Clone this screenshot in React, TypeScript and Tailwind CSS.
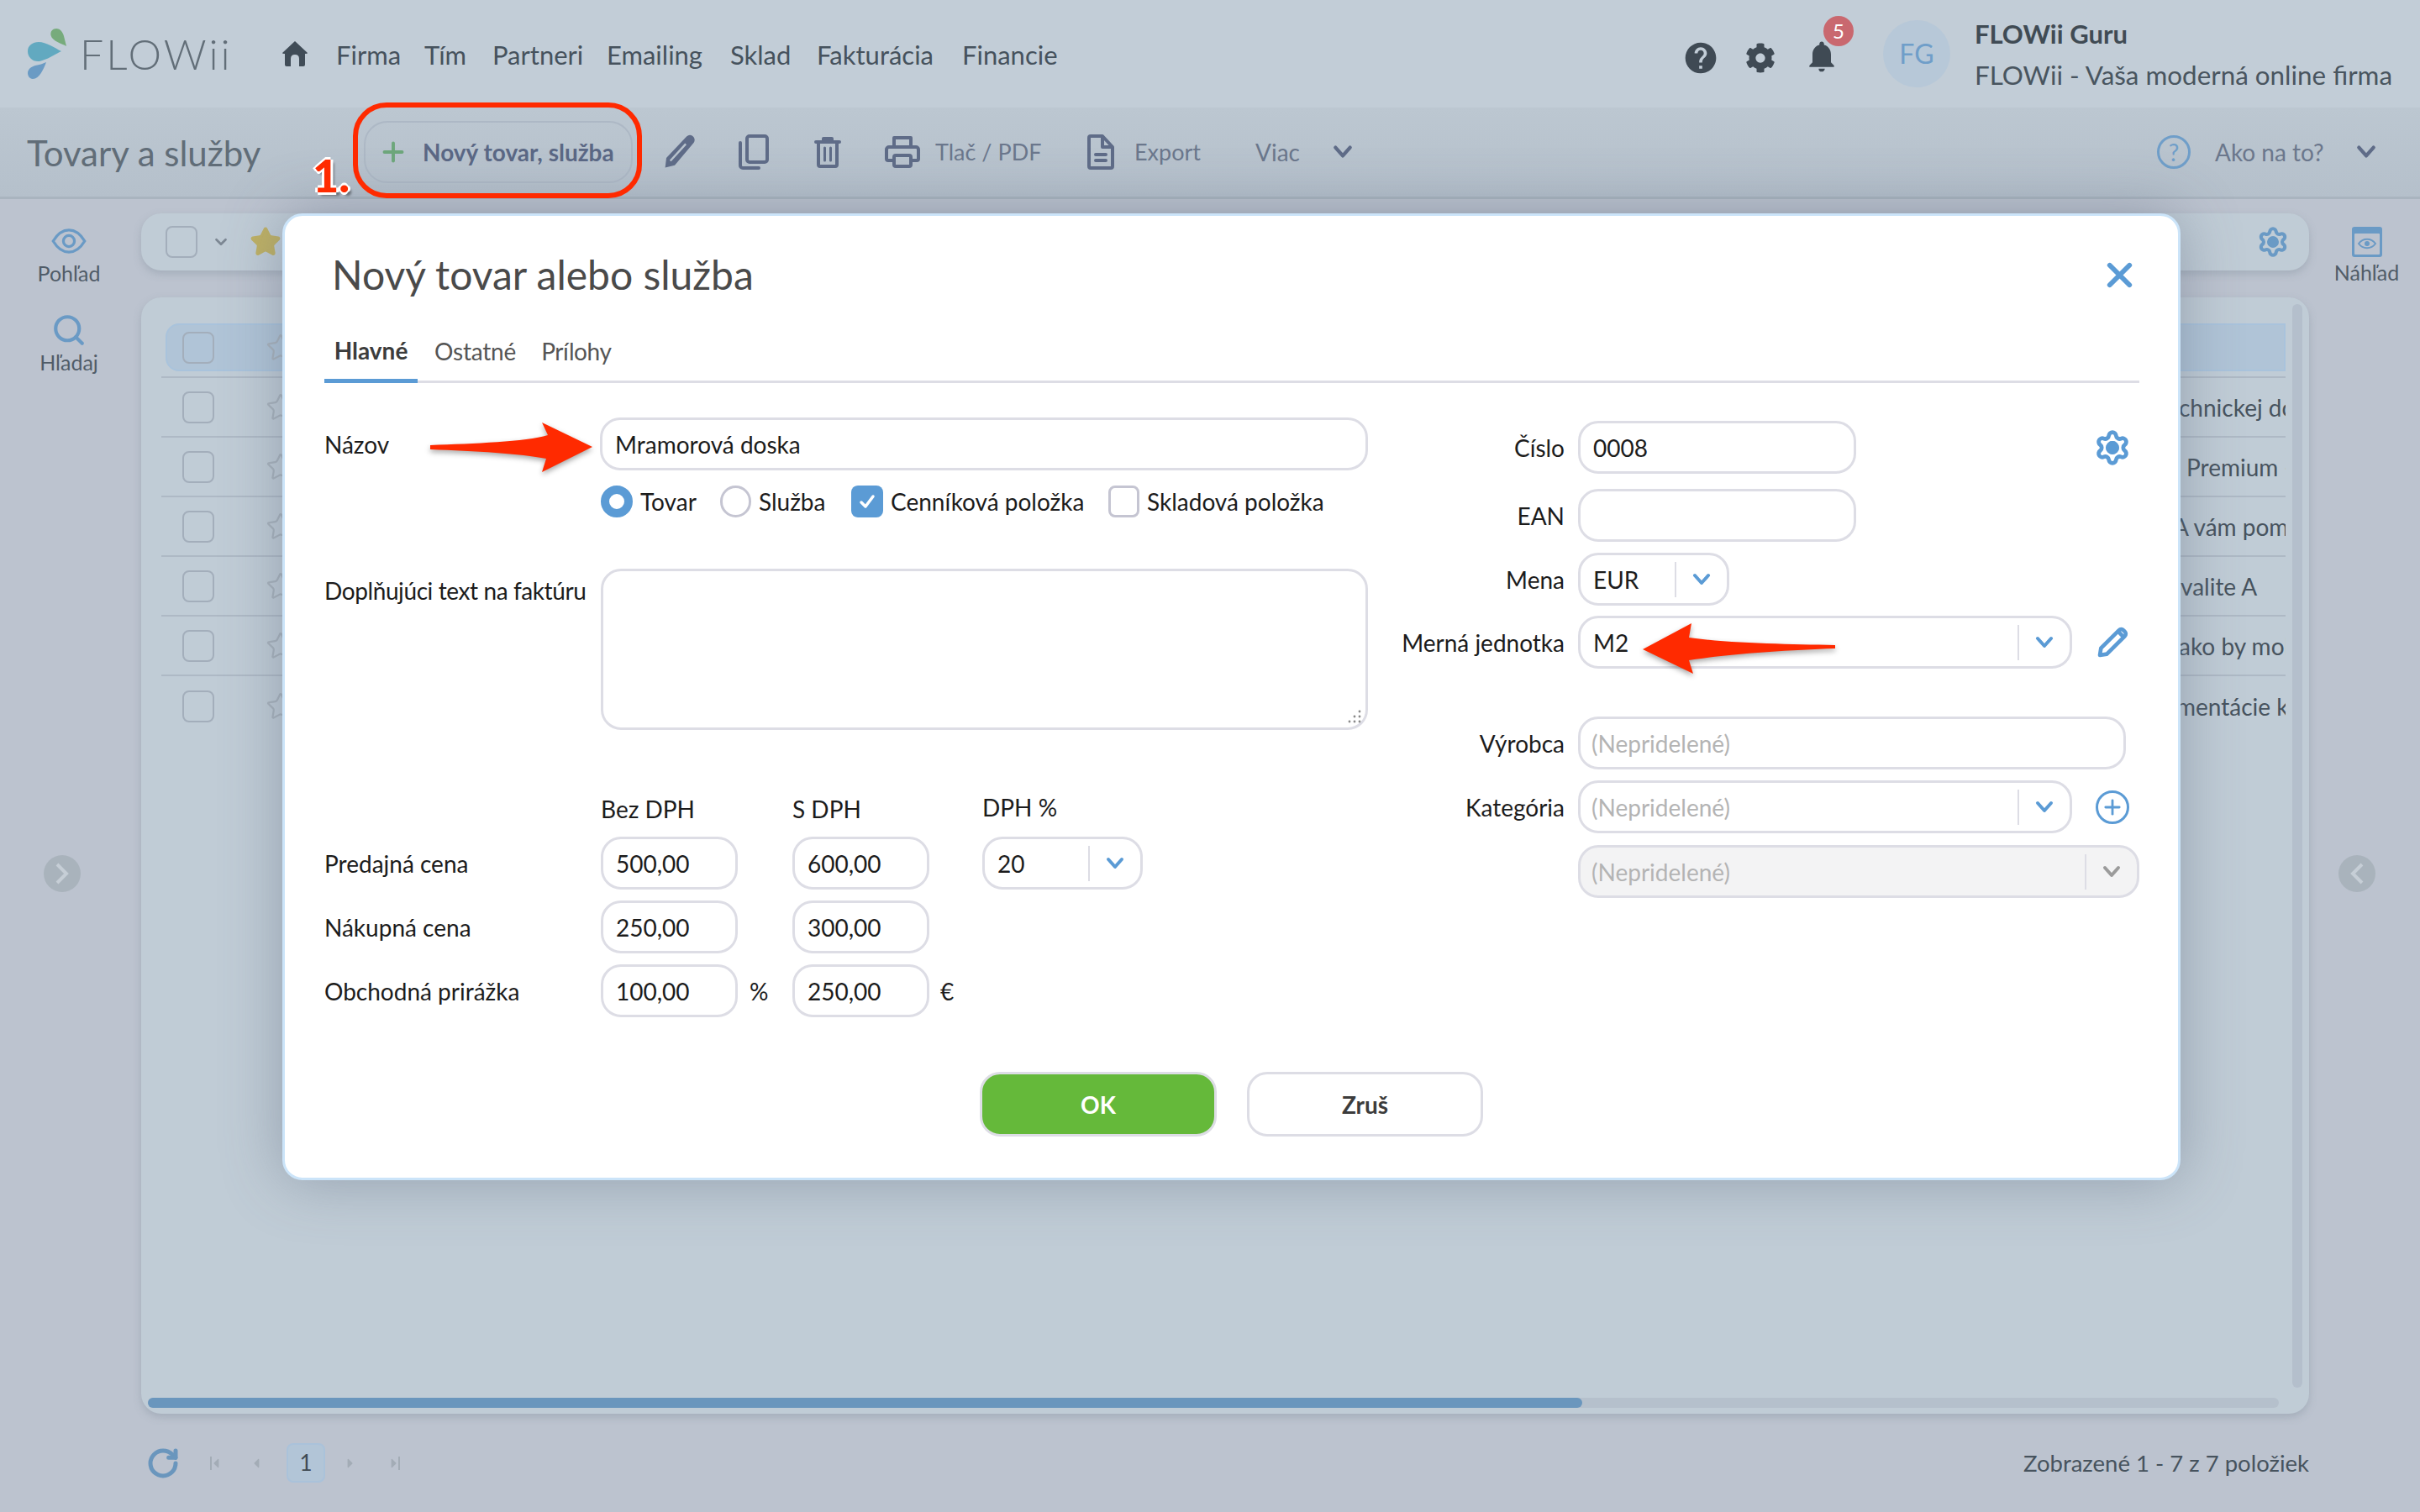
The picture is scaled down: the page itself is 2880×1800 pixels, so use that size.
import type React from "react"
import { useState } from "react"
import { ChevronDown, Plus, Settings, Star, X, Search, RotateCw } from "lucide-react"
import { MdHelp, MdNotifications } from "react-icons/md"
import { FaCog, FaCaretLeft, FaCaretRight } from "react-icons/fa"

const navItems = [
  { label: "Firma", cls: "w-[105px]" },
  { label: "Tím", cls: "w-[81px]" },
  { label: "Partneri", cls: "w-[136px]" },
  { label: "Emailing", cls: "w-[147px]" },
  { label: "Sklad", cls: "w-[103px]" },
  { label: "Fakturácia", cls: "w-[173px]" },
  { label: "Financie", cls: "w-[130px]" },
]

const rows = [
  { text: "", cls: "" },
  { text: "chnickej do", cls: "pl-[13px]" },
  { text: "Premium -", cls: "pl-[22px]" },
  { text: "A vám pom", cls: "pl-[6px]" },
  { text: "valite A", cls: "pl-[15px]" },
  { text: "ako by moh", cls: "pl-[13px]" },
  { text: "mentácie k", cls: "pl-[10px]" },
]

const Chevron = ({ className }: { className: string }) => (
  <svg viewBox="0 0 24 16" className={className} fill="none" stroke="currentColor" strokeWidth="4" strokeLinecap="round" strokeLinejoin="round">
    <path d="M4 3l8 9 8-9" />
  </svg>
)

const PencilIcon = ({ className }: { className: string }) => (
  <svg viewBox="0 0 24 24" className={className} fill="none" stroke="currentColor" strokeWidth="2.8" strokeLinejoin="round">
    <path d="M3 21l.8-5L16.6 3.2a2.3 2.3 0 0 1 3.3 0l.9.9a2.3 2.3 0 0 1 0 3.3L8 20.2z" />
    <path d="M16 4l4 4" />
  </svg>
)

const GearOutline = ({ className }: { className: string }) => (
  <Settings className={className} strokeWidth={2.6}>
    <circle cx="12" cy="12" r="3" fill="currentColor" />
  </Settings>
)

const Field = ({ value, placeholder, className }: { value?: string; placeholder?: string; className: string }) => (
  <div className={`h-[63px] shrink-0 rounded-[24px] border-[3px] border-[#dddde5] bg-white flex items-center text-[28px] ${value ? "pl-[15px] text-[#1c1c1c]" : "pl-[13px] text-[#b4b4b4]"} ${className}`}>
    {value || placeholder}
  </div>
)

const Select = ({ value, placeholder, className, disabled }: { value?: string; placeholder?: string; className: string; disabled?: boolean }) => (
  <div className={`h-[63px] shrink-0 rounded-[24px] border-[3px] border-[#dddde5] flex items-center text-[28px] ${disabled ? "bg-[#f3f3f4]" : "bg-white"} ${className}`}>
    <div className={`flex-1 ${value ? "pl-[15px] text-[#1c1c1c]" : "pl-[13px] text-[#b4b4b4]"}`}>{value || placeholder}</div>
    <div className="w-[62px] h-[42px] border-l-2 border-[#dddde5] flex items-center justify-center">
      <Chevron className={`w-[24px] h-[16px] ${disabled ? "text-[#9b9b9b]" : "text-[#5b9bd5]"}`} />
    </div>
  </div>
)

const PriceRow = ({ label, a, b, sa, sb, children }: { label: string; a: string; b: string; sa?: string; sb?: string; children?: React.ReactNode }) => (
  <div className="flex items-center text-[28px] text-[#1c1c1c]">
    <div className="w-[329px]">{label}</div>
    <Field value={a} className="w-[163px]" />
    <div className="w-[65px] pl-[14px]">{sa}</div>
    <Field value={b} className="w-[163px]" />
    <div className="w-[63px] pl-[13px]">{sb}</div>
    {children}
  </div>
)

const RightRow = ({ label, children }: { label?: string; children: React.ReactNode }) => (
  <div className="flex items-center text-[28px] text-[#1c1c1c]">
    <div className="w-[234px] text-right mr-[16px]">{label}</div>
    {children}
  </div>
)

const Modal = () => {
  const [tab] = useState("Hlavné")
  return (
    <div className="absolute left-[336px] top-[254px] w-[2259px] h-[1151px] rounded-[24px] border-[3px] border-[#cbe4f9] bg-white pl-[47px] pr-[46px] pt-[40px] shadow-[0_0_70px_rgba(90,105,125,0.45)]">
      <div className="flex items-center justify-between h-[60px]">
        <h2 className="ml-[9px] text-[48px] leading-[60px] text-[#4a4a4a]">Nový tovar alebo služba</h2>
        <X className="w-[47px] h-[47px] text-[#5b9bd5]" strokeWidth={3} />
      </div>
      <div className="mt-[26px] h-[73px] flex items-end border-b-[3px] border-[#dddde5] text-[28px]">
        <div className={`w-[111px] h-[73px] -mb-[3px] flex items-center justify-center border-b-[5px] border-[#5b9bd5] font-bold ${tab === "Hlavné" ? "text-[#3c3c3c]" : ""}`}>Hlavné</div>
        <div className="ml-[20px] h-[70px] flex items-center text-[#555555] tracking-[-0.2px]">Ostatné</div>
        <div className="ml-[30px] h-[70px] flex items-center text-[#555555] tracking-[-0.4px]">Prílohy</div>
      </div>

      <div className="flex">
        <div className="w-[1242px] pt-[41px] text-[28px] text-[#1c1c1c]">
          <div className="flex items-center">
            <div className="w-[329px]">Názov</div>
            <Field value="Mramorová doska" className="w-[914px]" />
          </div>
          <div className="ml-[329px] mt-[18px] h-[38px] flex items-center">
            <div className="w-[38px] h-[38px] rounded-full border-[10px] border-[#5b9bd5] bg-white"></div>
            <div className="ml-[9px] w-[95px]">Tovar</div>
            <div className="w-[37px] h-[38px] rounded-full border-[3px] border-[#c5c5d2]"></div>
            <div className="ml-[9px] w-[110px]">Služba</div>
            <div className="w-[38px] h-[38px] rounded-[8px] bg-[#5b9bd5] flex items-center justify-center">
              <svg viewBox="0 0 24 24" className="w-[24px] h-[24px]" fill="none" stroke="white" strokeWidth="3.5" strokeLinecap="round" strokeLinejoin="round">
                <path d="M5 13l5 5 9-12" />
              </svg>
            </div>
            <div className="ml-[9px] w-[259px]">Cenníková položka</div>
            <div className="w-[37px] h-[38px] rounded-[8px] border-[3px] border-[#c5c5d2]"></div>
            <div className="ml-[9px]">Skladová položka</div>
          </div>
          <div className="mt-[61px] flex items-start">
            <div className="w-[329px] pt-[5px] whitespace-nowrap tracking-[-0.4px]">Doplňujúci text na faktúru</div>
            <div className="relative w-[914px] h-[192px] rounded-[24px] border-[3px] border-[#dddde5]">
              <svg viewBox="0 0 20 20" className="absolute right-[3px] bottom-[3px] w-[20px] h-[20px] text-[#8a8a8a]" fill="currentColor">
                <circle cx="16" cy="4" r="1.4" /><circle cx="16" cy="10" r="1.4" /><circle cx="10" cy="10" r="1.4" />
                <circle cx="16" cy="16" r="1.4" /><circle cx="10" cy="16" r="1.4" /><circle cx="4" cy="16" r="1.4" />
              </svg>
            </div>
          </div>
          <div className="mt-[76px] h-[36px] flex items-center">
            <div className="ml-[329px] w-[228px]">Bez DPH</div>
            <div className="w-[226px]">S DPH</div>
            <div className="-mt-[4px]">DPH %</div>
          </div>
          <div className="mt-[15px] flex flex-col gap-[13px]">
            <PriceRow label="Predajná cena" a="500,00" b="600,00">
              <Select value="20" className="w-[191px]" />
            </PriceRow>
            <PriceRow label="Nákupná cena" a="250,00" b="300,00" />
            <PriceRow label="Obchodná prirážka" a="100,00" b="250,00" sa="%" sb="€" />
          </div>
        </div>

        <div className="flex-1 pt-[45px]">
          <RightRow label="Číslo">
            <Field value="0008" className="w-[331px]" />
            <GearOutline className="ml-[283px] w-[44px] h-[44px] text-[#5b9bd5]" />
          </RightRow>
          <div className="mt-[18px]"><RightRow label="EAN"><Field className="w-[331px]" /></RightRow></div>
          <div className="mt-[13px]"><RightRow label="Mena"><Select value="EUR" className="w-[180px]" /></RightRow></div>
          <div className="mt-[12px]">
            <RightRow label="Merná jednotka">
              <Select value="M2" className="w-[588px]" />
              <PencilIcon className="ml-[28px] w-[40px] h-[40px] text-[#5b9bd5]" />
            </RightRow>
          </div>
          <div className="mt-[57px]"><RightRow label="Výrobca"><Field placeholder="(Nepridelené)" className="w-[652px]" /></RightRow></div>
          <div className="mt-[13px]">
            <RightRow label="Kategória">
              <Select placeholder="(Nepridelené)" className="w-[588px]" />
              <div className="ml-[28px] w-[40px] h-[40px] rounded-full border-[3px] border-[#5b9bd5] flex items-center justify-center">
                <Plus className="w-[28px] h-[28px] text-[#5b9bd5]" strokeWidth={2.4} />
              </div>
            </RightRow>
          </div>
          <div className="mt-[14px]"><RightRow><Select placeholder="(Nepridelené)" className="w-[668px]" disabled /></RightRow></div>
        </div>
      </div>

      <div className="absolute left-[0px] right-[0px] top-[1019px] flex justify-center gap-[36px] text-[28px] font-bold">
        <button className="w-[282px] h-[77px] rounded-[24px] bg-[#65b93a] border-[3px] border-[#dddde5] text-white">OK</button>
        <button className="w-[281px] h-[77px] rounded-[24px] bg-white border-[3px] border-[#dddde5] text-[#3c3c3c]">Zruš</button>
      </div>

      <svg className="absolute left-[-339px] top-[-257px] w-[2880px] h-[1800px] pointer-events-none overflow-visible" viewBox="0 0 2880 1800">
        <g fill="#ff2a00" className="drop-shadow-[0_3px_3px_rgba(0,0,0,0.35)]">
          <path d="M512 530C565 528 625 526 652 518L645 503L705 532L645 562L650 546C620 540 565 537 512 535Z" />
          <path d="M1955 773L2013 742L2010 759C2060 766 2130 767 2184 768L2184 772C2130 774 2060 778 2010 786L2015 802Z" />
        </g>
      </svg>
    </div>
  )
}

export default function App() {
  return (
    <div className="relative w-[2880px] h-[1800px] overflow-hidden bg-[#bcc3cf] flex flex-col [font-family:Lato,sans-serif]">
      {/* top bar */}
      <header className="h-[128px] shrink-0 bg-[#c2cdd7] flex items-center">
        <svg viewBox="0 0 50 64" className="ml-[32px] w-[50px] h-[64px]">
          <path d="M47 23C42 20 30 17 28.5 10C27.5 5 31 2 35 2C40 2 43 7 44 11C45 15 46 19 47 23Z" fill="#77ab7c" />
          <path d="M41 29C33 33 24 39 15 41C7 42 1 36 1 29C1 22 7 18 14 18C23 18 33 25 41 29Z" fill="#62a9c0" />
          <path d="M23 42C20 50 15 62 7 62C3 62 1 58 1 55C1 50 6 47 10 46C15 45 19 44 23 42Z" fill="#6b9bc4" />
        </svg>
        <div className="ml-[13px] w-[240px] text-[50px] font-light tracking-[3px] text-[#626e78] leading-none">FLOWii</div>
        <svg viewBox="0 0 32 32" className="w-[32px] h-[32px] text-[#404c57]" fill="currentColor">
          <path d="M16 1L31 15Q31 16 29 16H28V29Q28 31 26 31H21V22Q21 17 16 17Q11 17 11 22V31H6Q4 31 4 29V16H3Q1 16 1 15Z" />
        </svg>
        <nav className="ml-[33px] pt-[2px] flex text-[31px] text-[#46525d]">
          {navItems.map((item) => (
            <div key={item.label} className={item.cls}>{item.label}</div>
          ))}
        </nav>
        <div className="ml-auto flex items-center">
          <MdHelp className="mt-[10px] w-[44px] h-[44px] text-[#3f4a54]" />
          <FaCog className="mt-[10px] ml-[31px] w-[36px] h-[36px] text-[#3f4a54]" />
          <div className="relative ml-[33px] mt-[6px]">
            <MdNotifications className="w-[44px] h-[44px] text-[#3f4a54]" />
            <div className="absolute -top-[26px] left-[24px] w-[36px] h-[36px] rounded-full bg-[#c9686f] text-white text-[24px] flex items-center justify-center">5</div>
          </div>
          <div className="ml-[51px] w-[80px] h-[80px] rounded-full bg-[#b7c8d8] text-[#6f9ec9] text-[32px] flex items-center justify-center">FG</div>
          <div className="ml-[29px] mr-[32px] w-[498px] whitespace-nowrap">
            <div className="text-[31px] leading-[50px] font-bold text-[#404b54]">FLOWii Guru</div>
            <div className="text-[31.4px] leading-[48px] text-[#49555f]">FLOWii - Vaša moderná online firma</div>
          </div>
        </div>
      </header>

      {/* toolbar */}
      <div className="h-[109px] shrink-0 bg-linear-to-b from-[#bcc7d1] to-[#b5c0cb] border-b-[3px] border-[#a9b4bf] flex items-center text-[28px] text-[#6b778c]">
        <div className="w-[433px] pl-[32px] pt-[2px] text-[42px] text-[#616d78]">Tovary a služby</div>
        <div className="w-[320px] h-[74px] rounded-[28px] border-2 border-[#adb8c5] flex items-center">
          <Plus className="ml-[15px] w-[36px] h-[36px] text-[#6ea77c]" strokeWidth={2.6} />
          <span className="ml-[17px] font-bold text-[#5b6885] whitespace-nowrap">Nový tovar, služba</span>
        </div>
        <svg viewBox="0 0 24 24" className="ml-[36px] w-[42px] h-[42px] text-[#5f6c88]" fill="currentColor">
          <path d="M1.5 22.5l.8-6.5L15.5 2a3.2 3.2 0 0 1 5.5 3.5L8 21z" />
          <path d="M5 18L15.5 6.5" stroke="#b9c4ce" strokeWidth="1.4" fill="none" />
        </svg>
        <svg viewBox="0 0 36 42" className="ml-[48px] w-[36px] h-[42px] text-[#5f6c88]" fill="none" stroke="currentColor" strokeWidth="4" strokeLinejoin="round" strokeLinecap="round">
          <rect x="10" y="2" width="24" height="31" rx="3" />
          <path d="M2 10v27a3 3 0 0 0 3 3h19" />
        </svg>
        <svg viewBox="0 0 32 38" className="ml-[54px] w-[32px] h-[38px] text-[#5f6c88]" fill="none" stroke="currentColor" strokeWidth="4" strokeLinejoin="round" strokeLinecap="round">
          <path d="M2 7h28M11 6V3h10v3" />
          <path d="M5 8v26a2 2 0 0 0 2 2h18a2 2 0 0 0 2-2V8" />
          <path d="M12.5 14v15M19.5 14v15" strokeWidth="3" />
        </svg>
        <svg viewBox="0 0 42 38" className="ml-[52px] w-[42px] h-[38px] text-[#5f6c88]" fill="none" stroke="currentColor" strokeWidth="4" strokeLinejoin="round">
          <path d="M11 13V2h20v11" />
          <path d="M11 29H4a2 2 0 0 1-2-2V16a3 3 0 0 1 3-3h32a3 3 0 0 1 3 3v11a2 2 0 0 1-2 2h-7" />
          <rect x="11" y="23" width="20" height="13" rx="2" />
        </svg>
        <span className="ml-[18px] w-[181px] text-[27px] whitespace-nowrap">Tlač / PDF</span>
        <svg viewBox="0 0 32 42" className="w-[32px] h-[42px] text-[#5f6c88]" fill="none" stroke="currentColor" strokeWidth="4" strokeLinejoin="round" strokeLinecap="round">
          <path d="M4 2h14l12 13v23a2 2 0 0 1-2 2H4a2 2 0 0 1-2-2V4a2 2 0 0 1 2-2z" />
          <path d="M18 3v12h11" />
          <path d="M10 24h12M10 31h12" />
        </svg>
        <span className="ml-[24px] w-[144px] text-[27px]">Export</span>
        <span className="w-[91px]">Viac</span>
        <Chevron className="w-[26px] h-[18px] text-[#5f6c88]" />
        <div className="ml-auto flex items-center">
          <div className="w-[40px] h-[40px] rounded-full border-[3px] border-[#6f9ec9] text-[#6f9ec9] text-[28px] flex items-center justify-center">?</div>
          <span className="ml-[29px] w-[167px]">Ako na to?</span>
          <Chevron className="mr-[51px] w-[26px] h-[18px] text-[#5f6c88]" />
        </div>
      </div>

      {/* body */}
      <div className="flex-1 flex min-h-0">
        <aside className="w-[168px] shrink-0 pt-[35px] pr-[4px] flex flex-col items-center text-[24px] leading-[30px] text-[#505c68]">
          <svg viewBox="0 0 44 32" className="w-[42px] h-[30px] text-[#6a9ac5]" fill="none" stroke="currentColor" strokeWidth="3.5">
            <path d="M2 16C8 6 15 2 22 2s14 4 20 14c-6 10-13 14-20 14S8 26 2 16z" />
            <circle cx="22" cy="16" r="7" />
          </svg>
          <div className="mt-[8px] text-[25px]">Pohľad</div>
          <Search className="mt-[32px] w-[42px] h-[42px] text-[#6a9ac5]" strokeWidth={2.4} />
          <div className="mt-[2px] text-[25px]">Hľadaj</div>
        </aside>

        <main className="w-[2580px] shrink-0 pt-[17px] flex flex-col">
          <div className="h-[68px] rounded-[24px] bg-[#c0ccd6] shadow-[0_4px_10px_rgba(120,135,150,0.35)] flex items-center">
            <div className="ml-[29px] w-[38px] h-[38px] rounded-[8px] border-2 border-[#a3aebb]"></div>
            <ChevronDown className="ml-[17px] w-[22px] h-[22px] text-[#7d8894]" strokeWidth={3} />
            <Star className="ml-[23px] w-[38px] h-[38px] text-[#bfb164]" fill="currentColor" />
            <GearOutline className="ml-auto mr-[24px] w-[38px] h-[38px] text-[#6a9ac5]" />
          </div>
          <div className="relative mt-[32px] h-[1329px] rounded-[24px] bg-[#c0ccd6] shadow-[0_4px_10px_rgba(120,135,150,0.35)] pt-[25px] pl-[24px]">
            <div className="absolute right-[8px] top-[8px] w-[12px] h-[1290px] rounded-full bg-[#b4bfcc]"></div>
            {rows.map((row, i) => (
              <div key={i} className={`w-[2528px] h-[71px] flex items-center text-[28px] text-[#47535e] ${i < 6 ? "border-b-2 border-[#aeb9c5]" : ""}`}>
                <div className={`h-[57px] w-full flex items-center ml-[5px] ${i === 0 ? "rounded-l-[16px] border-2 border-[#a9c3dc] bg-[#b0c4d7]" : ""}`}>
                  <div className={`w-[38px] h-[38px] rounded-[8px] border-2 border-[#a3aebb] ${i === 0 ? "ml-[18px]" : "ml-[20px]"}`}></div>
                  <Star className="ml-[61px] w-[36px] h-[36px] text-[#a9b3bd]" strokeWidth={1.5} />
                  <div className={`ml-auto w-[140px] overflow-hidden whitespace-nowrap ${row.cls}`}>{row.text}</div>
                </div>
              </div>
            ))}
            <div className="absolute left-[8px] bottom-[7px] w-[2536px] h-[12px] rounded-full bg-[#b5c0cc]">
              <div className="w-[1707px] h-[12px] rounded-full bg-[#6a96bd]"></div>
            </div>
          </div>
          <div className="flex-1 flex items-center text-[#a3acb6]">
            <RotateCw className="ml-[6px] w-[40px] h-[40px] text-[#6a96bd]" strokeWidth={3} />
            <div className="ml-[36px] flex items-center text-[#a3acb6]">
              <div className="w-[2px] h-[16px] bg-[#a3acb6]"></div>
              <FaCaretLeft className="-ml-[3px] w-[16px] h-[18px]" />
              <FaCaretLeft className="ml-[32px] w-[16px] h-[18px]" />
            </div>
            <div className="ml-[28px] w-[46px] h-[47px] rounded-[8px] border-2 border-[#aac2da] bg-[#b2c5d7] text-[26px] text-[#3f4a54] flex items-center justify-center">1</div>
            <FaCaretRight className="ml-[22px] w-[16px] h-[18px]" />
            <FaCaretRight className="ml-[36px] w-[16px] h-[18px]" />
            <div className="w-[2px] h-[16px] bg-[#a3acb6] -ml-[3px]"></div>
            <div className="ml-auto text-[27.5px] text-[#47535e]">Zobrazené 1 - 7 z 7 položiek</div>
          </div>
        </main>

        <aside className="flex-1 pt-[33px] pl-[5px] flex flex-col items-center text-[25px] leading-[28px] text-[#505c68]">
          <svg viewBox="0 0 36 36" className="w-[36px] h-[36px] text-[#6a9ac5]" fill="none">
            <rect width="36" height="36" rx="3" fill="currentColor" />
            <rect x="3" y="8" width="30" height="25" rx="1" fill="#bcc3cf" />
            <path d="M8 20c5-7 15-7 20 0c-5 7-15 7-20 0z" stroke="currentColor" strokeWidth="2" />
            <circle cx="18" cy="20" r="3" fill="currentColor" />
          </svg>
          <div className="mt-[4px]">Náhľad</div>
        </aside>
      </div>

      {/* arrows at the sides of the list */}
      <div className="absolute left-[52px] top-[1018px] w-[44px] h-[44px] rounded-full bg-[#a9b3bc] flex items-center justify-center">
        <svg viewBox="0 0 16 26" className="w-[16px] h-[26px] text-[#c6ced6]" fill="none" stroke="currentColor" strokeWidth="4">
          <path d="M2 2l11 11L2 24" />
        </svg>
      </div>
      <div className="absolute left-[2783px] top-[1018px] w-[44px] h-[44px] rounded-full bg-[#a9b3bc] flex items-center justify-center">
        <svg viewBox="0 0 16 26" className="w-[16px] h-[26px] text-[#c6ced6]" fill="none" stroke="currentColor" strokeWidth="4">
          <path d="M14 2L3 13l11 11" />
        </svg>
      </div>

      <Modal />

      {/* red callout */}
      <div className="absolute left-[420px] top-[122px] w-[344px] h-[114px] rounded-[40px] border-[6px] border-[#ff2a00]"></div>
      <div className="absolute left-[372px] top-[180px] text-[54px] leading-[58px] font-black text-[#ff2a00] [text-shadow:3px_0_0_#fff,-3px_0_0_#fff,0_3px_0_#fff,0_-3px_0_#fff,4px_4px_3px_rgba(0,0,0,0.4)]">1.</div>
    </div>
  )
}
